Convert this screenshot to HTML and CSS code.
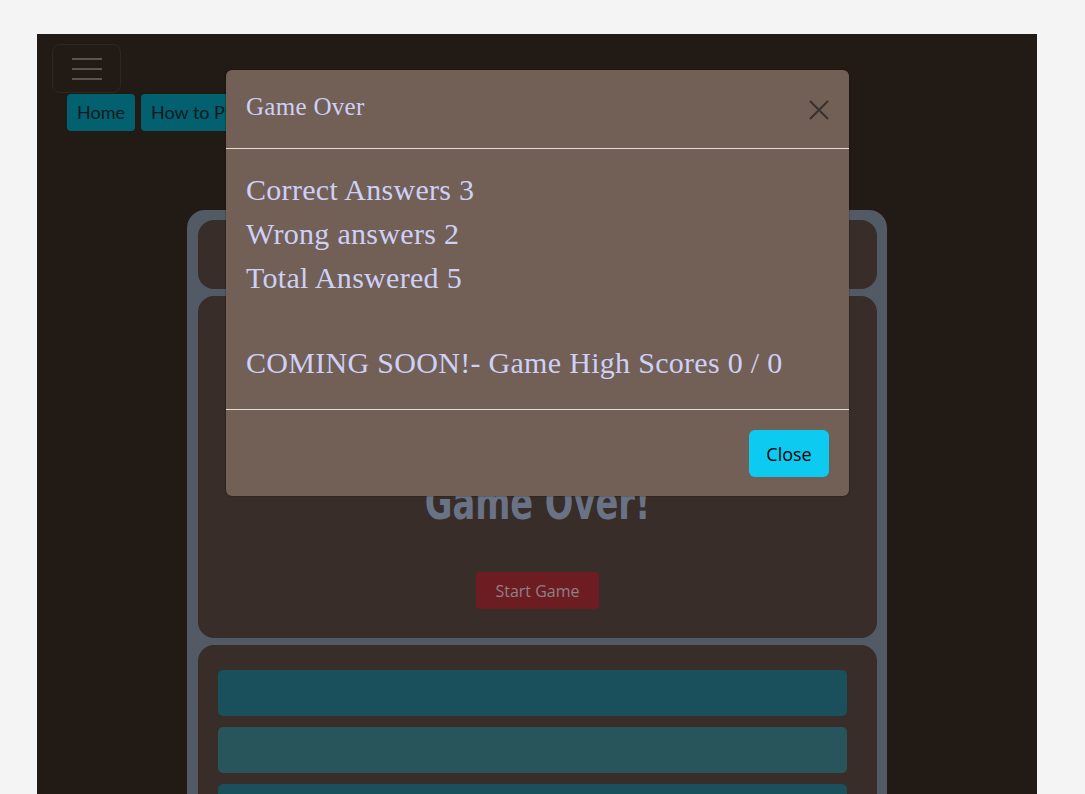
FILE: index.html
```html
<!DOCTYPE html>
<html lang="en">
<head>
<meta charset="utf-8">
<title>Quiz Game</title>
<link rel="stylesheet" href="styles.css">
</head>
<body>
<div class="page">
  <header class="topbar">
    <button class="burger" aria-label="Menu">
      <span></span><span></span><span></span>
    </button>
    <nav class="nav">
      <a class="nav-btn" href="#">Home</a>
      <a class="nav-btn" href="#">How to Play</a>
    </nav>
  </header>

  <main class="board">
    <section class="panel panel-top"></section>
    <section class="panel panel-main">
      <h1 class="over-title">Game Over!</h1>
      <button class="start-btn">Start Game</button>
    </section>
    <section class="panel panel-answers">
      <div class="answer a1"></div>
      <div class="answer a2"></div>
      <div class="answer a1"></div>
    </section>
  </main>

  <div class="modal">
    <div class="modal-header">
      <h5 class="modal-title">Game Over</h5>
      <button class="modal-x" aria-label="Close">
        <svg width="20" height="20" viewBox="0 0 20 20"><path d="M1 1 L19 19 M19 1 L1 19" stroke="#3a302c" stroke-width="2" fill="none"/></svg>
      </button>
    </div>
    <div class="modal-body">
      <div class="line">Correct Answers 3</div>
      <div class="line">Wrong answers 2</div>
      <div class="line">Total Answered 5</div>
      <div class="blank"></div>
      <div class="line">COMING SOON!- Game High Scores 0 / 0</div>
    </div>
    <div class="modal-footer">
      <button class="close-btn">Close</button>
    </div>
  </div>
</div>
</body>
</html>
```

FILE: styles.css
```css
* { box-sizing: border-box; }
html, body { margin: 0; padding: 0; }
body {
  background: #f4f4f4;
  height: 794px;
  overflow: hidden;
  font-family: "Open Sans", "Noto Sans", sans-serif;
}
.page {
  position: relative;
  margin: 34px 0 0 37px;
  width: 1000px;
  height: 760px;
  overflow: hidden;
  background: #221a15;
  padding: 10px 0 0 15px;
}
.topbar { display: flex; flex-direction: column; }
.burger {
  width: 69px;
  height: 49px;
  background: transparent;
  border: 1px solid #2e2622;
  border-radius: 8px;
  display: flex;
  flex-direction: column;
  justify-content: center;
  align-items: center;
  gap: 8px;
  padding: 0;
}
.burger span {
  display: block;
  width: 30px;
  height: 2px;
  background: #5b5551;
}
.nav {
  display: flex;
  gap: 6px;
  margin: 1px 0 0 15px;
}
.nav-btn {
  display: inline-block;
  background: #03606f;
  color: #0b1a1e;
  text-decoration: none;
  font-family: Lato, "Open Sans", sans-serif;
  font-size: 18px;
  height: 37px;
  line-height: 37px;
  padding: 0 10px;
  border-radius: 4px;
}
.board {
  width: 700px;
  margin: 79px 0 0 135px;
  background: #525a66;
  border-radius: 18px 18px 0 0;
  padding: 10px 10px 0 11px;
  display: flex;
  flex-direction: column;
  gap: 7px;
}
.panel {
  background: #382d29;
  border-radius: 16px;
  flex: none;
}
.panel-top { height: 69px; }
.panel-main {
  height: 342px;
  display: flex;
  flex-direction: column;
  align-items: center;
  padding-top: 182px;
}
.over-title {
  margin: 0;
  font-family: "DejaVu Sans Condensed", "DejaVu Sans", sans-serif;
  font-weight: bold;
  font-size: 48px;
  line-height: 48px;
  color: #6a7386;
  transform: scaleX(0.78);
}
.start-btn {
  margin-top: 46px;
  width: 123px;
  height: 37px;
  background: #6d1c22;
  color: #8d8182;
  border: none;
  border-radius: 4px;
  font-family: "Open Sans", "Noto Sans", sans-serif;
  font-size: 16px;
  padding: 0;
}
.panel-answers {
  height: 220px;
  border-radius: 16px 16px 0 0;
  padding: 25px 30px 0 20px;
  display: flex;
  flex-direction: column;
  gap: 11px;
}
.answer {
  height: 46px;
  border-radius: 5px;
  flex: none;
}
.a1 { background: #19505b; }
.a2 { background: #28545c; }

.modal {
  position: absolute;
  left: 189px;
  top: 36px;
  width: 623px;
  height: 426px;
  background: #725f56;
  border-radius: 6px;
  box-shadow: 0 0 2px rgba(0,0,0,0.5);
  display: flex;
  flex-direction: column;
  font-family: "Liberation Serif", "DejaVu Serif", serif;
  color: #cdd1f6;
}
.modal-header {
  height: 79px;
  border-bottom: 1px solid #e2dcd8;
  display: flex;
  align-items: center;
  justify-content: space-between;
  padding: 0 20px;
}
.modal-title {
  margin: 0;
  font-weight: normal;
  font-size: 25px;
  letter-spacing: 0.3px;
  position: relative;
  top: -2px;
}
.modal-x {
  background: none;
  border: none;
  padding: 0;
  width: 20px;
  height: 20px;
  display: flex;
  margin-top: 2px;
}
.modal-body {
  padding: 19px 20px 23px;
  height: 261px;
  border-bottom: 1px solid #e2dcd8;
  font-size: 30px;
  letter-spacing: 0.3px;
}
.line { line-height: 44px; white-space: nowrap; }
.blank { height: 41px; }
.modal-footer {
  flex: 1;
  display: flex;
  justify-content: flex-end;
  align-items: flex-start;
  padding: 20px 20px 0;
}
.close-btn {
  width: 80px;
  height: 47px;
  background: #0dcaf0;
  color: #000;
  border: none;
  border-radius: 6px;
  font-family: "Open Sans", "Noto Sans", sans-serif;
  font-size: 18px;
  padding: 0;
}
```
